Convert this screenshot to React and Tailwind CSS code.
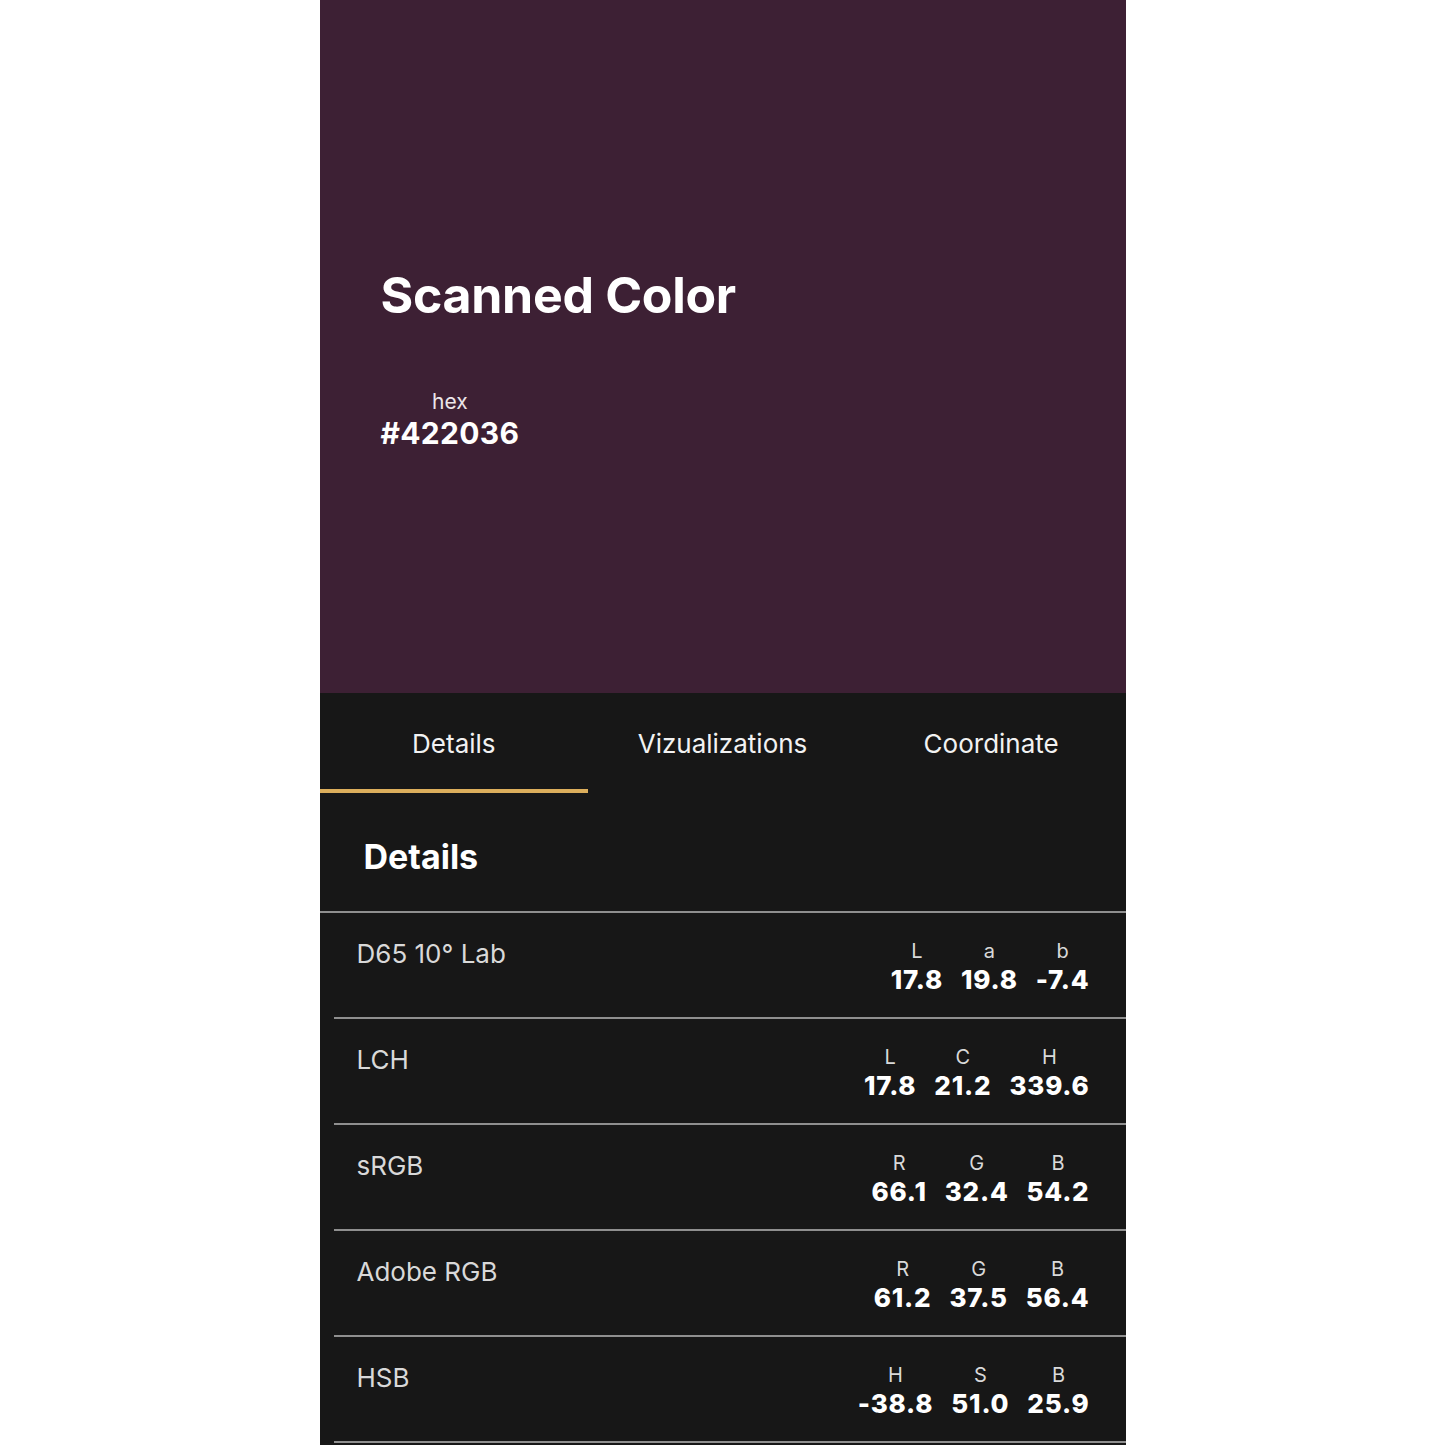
import React from 'react';

const rows = [
  { name: 'D65 10° Lab', vals: [['L', '17.8'], ['a', '19.8'], ['b', '-7.4']] },
  { name: 'LCH', vals: [['L', '17.8'], ['C', '21.2'], ['H', '339.6']] },
  { name: 'sRGB', vals: [['R', '66.1'], ['G', '32.4'], ['B', '54.2']] },
  { name: 'Adobe RGB', vals: [['R', '61.2'], ['G', '37.5'], ['B', '56.4']] },
  { name: 'HSB', vals: [['H', '-38.8'], ['S', '51.0'], ['B', '25.9']] },
];

const tabs = ['Details', 'Vizualizations', 'Coordinate'];

const App = () => {
  return (
    <main className="min-h-screen bg-white font-['Inter',sans-serif]">
      <div className="mx-auto w-[806px] bg-[#171717] h-[1445px] overflow-hidden">

        {/* Swatch */}
        <div className="h-[693px] bg-[#3d2034] px-[61px] pt-[262px]">
          <h1 className="text-[50px] leading-[66px] font-bold text-white tracking-[-0.3px]">Scanned Color</h1>
          <div className="mt-[62px] inline-flex flex-col items-center">
            <span className="text-[21px] leading-[24px] text-[#ece6ea]">hex</span>
            <span className="text-[30px] leading-[38px] font-bold text-white tracking-[0.3px]">#422036</span>
          </div>
        </div>

        {/* Tabs */}
        <div className="flex h-[100px]">
          {tabs.map((t, i) => (
            <div key={t} className="flex-1 flex flex-col">
              <div className="flex-1 flex items-center justify-center pt-[4px] text-[26px] text-[#f2f2f2]">{t}</div>
              <div className={`h-[4px] ${i === 0 ? 'bg-[#dcae5c]' : ''}`} />
            </div>
          ))}
        </div>

        <h2 className="px-[44px] pt-[43px] pb-[33px] text-[34px] leading-[42px] font-bold text-white">Details</h2>
        <div className="h-[2px] bg-[#8f8f8f]" />

        {/* Rows */}
        {rows.map((r) => (
          <div key={r.name} className="ml-[14px]">
            <div className="h-[104px] flex justify-between pl-[23px] pr-[36px]">
              <div className="pt-[27px] text-[26px] leading-[28px] text-[#d9d9d9]">{r.name}</div>
              <div className="pt-[26px] flex gap-[18px]">
                {r.vals.map(([k, v]) => (
                  <div key={k} className="flex flex-col items-center">
                    <span className="text-[20px] leading-[24px] text-[#d9d9d9]">{k}</span>
                    <span className="text-[26px] leading-[34px] font-extrabold text-white tracking-[0.8px]">{v}</span>
                  </div>
                ))}
              </div>
            </div>
            <div className="h-[2px] bg-[#8f8f8f]" />
          </div>
        ))}

      </div>
    </main>
  );
};

export default App;
